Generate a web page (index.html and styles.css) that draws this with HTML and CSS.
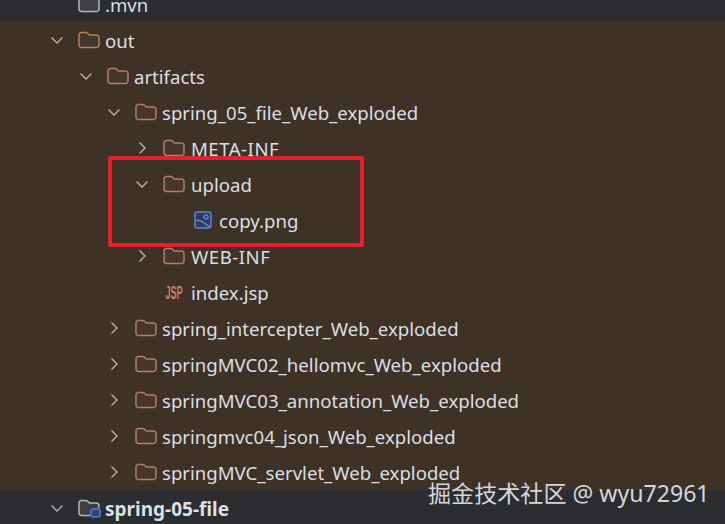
FILE: index.html
```html
<!DOCTYPE html>
<html lang="en">
<head>
<meta charset="utf-8">
<title>Project tree</title>
<link rel="stylesheet" href="styles.css">
</head>
<body>
<svg class="defs" width="0" height="0" aria-hidden="true">
  <defs>
    <symbol id="folder" viewBox="0 0 22 18">
      <path d="M1 4a2.5 2.5 0 0 1 2.5-2.5h4.3c.7 0 1.3.3 1.8.8l1.7 1.7h7.2A2.5 2.5 0 0 1 21 6.500V14a2.500 2.500 0 0 1-2.500 2.500h-15A2.500 2.500 0 0 1 1 14z" />
    </symbol>
    <symbol id="down" viewBox="0 0 16 16"><path d="M2.500 5.500 8 11l5.500-5.500" /></symbol>
    <symbol id="right" viewBox="0 0 16 16"><path d="M5.500 2.500 11 8l-5.500 5.500" /></symbol>
  </defs>
</svg>
<main class="tree">
  <section class="band-top">
    <div class="row l0"><span class="chev"></span><svg class="ico folder grey"><use href="#folder"/></svg><span class="name">.mvn</span></div>
  </section>
  <section class="band-mid">
    <div class="row l0"><svg class="chev"><use href="#down"/></svg><svg class="ico folder"><use href="#folder"/></svg><span class="name">out</span></div>
    <div class="row l1"><svg class="chev"><use href="#down"/></svg><svg class="ico folder"><use href="#folder"/></svg><span class="name">artifacts</span></div>
    <div class="row l2"><svg class="chev"><use href="#down"/></svg><svg class="ico folder"><use href="#folder"/></svg><span class="name">spring_05_file_Web_exploded</span></div>
    <div class="row l3"><svg class="chev"><use href="#right"/></svg><svg class="ico folder"><use href="#folder"/></svg><span class="name caps">META-INF</span></div>
    <div class="row l3"><svg class="chev"><use href="#down"/></svg><svg class="ico folder"><use href="#folder"/></svg><span class="name">upload</span></div>
    <div class="row l4"><span class="chev"></span>
      <svg class="ico image" viewBox="0 0 18 18"><rect x="1" y="1" width="16" height="16" rx="2.500"/><circle cx="12" cy="6" r="2"/><path d="M1.500 9.500 C5 8 9 11 16.500 16.500"/></svg>
      <span class="name">copy.png</span></div>
    <div class="row l3"><svg class="chev"><use href="#right"/></svg><svg class="ico folder"><use href="#folder"/></svg><span class="name caps">WEB-INF</span></div>
    <div class="row l3"><span class="chev"></span>
      <svg class="ico jsp" viewBox="0 0 22 18"><text transform="translate(2.500 15.500) scale(.5 1)">JSP</text></svg>
      <span class="name">index.jsp</span></div>
    <div class="row l2"><svg class="chev"><use href="#right"/></svg><svg class="ico folder"><use href="#folder"/></svg><span class="name">spring_intercepter_Web_exploded</span></div>
    <div class="row l2"><svg class="chev"><use href="#right"/></svg><svg class="ico folder"><use href="#folder"/></svg><span class="name">springMVC02_hellomvc_Web_exploded</span></div>
    <div class="row l2"><svg class="chev"><use href="#right"/></svg><svg class="ico folder"><use href="#folder"/></svg><span class="name">springMVC03_annotation_Web_exploded</span></div>
    <div class="row l2"><svg class="chev"><use href="#right"/></svg><svg class="ico folder"><use href="#folder"/></svg><span class="name">springmvc04_json_Web_exploded</span></div>
    <div class="row l2"><svg class="chev"><use href="#right"/></svg><svg class="ico folder"><use href="#folder"/></svg><span class="name">springMVC_servlet_Web_exploded</span></div>
  </section>
  <section class="band-bottom">
    <div class="row l0"><svg class="chev"><use href="#down"/></svg>
      <svg class="ico module" viewBox="0 0 22 18"><path class="outline" d="M12 16.500H3.500A2.500 2.500 0 0 1 1 14V4a2.500 2.500 0 0 1 2.500-2.500h4.300c.7 0 1.300.3 1.800.8l1.700 1.700h7.200A2.500 2.500 0 0 1 21 6.500V9"/><rect class="badge" x="13" y="10" width="9" height="8" rx="2"/></svg>
      <span class="name strong">spring-05-file</span></div>
  </section>
</main>
<div class="highlight"></div>
<div class="watermark">掘金技术社区 @ wyu72961</div>
</body>
</html>
```
FILE: styles.css
```css
* { box-sizing: border-box; }
html, body { height: 100%; }
body {
  margin: 0;
  position: relative;
  overflow: hidden;
  background: #3e3226;
  font-family: "Noto Sans", "Open Sans", sans-serif;
  color: #dcdfe4;
}
.defs { position: absolute; }
.tree { display: flex; flex-direction: column; height: 524px; }
.band-top {
  flex: 0 0 21px;
  min-height: 0;
  display: flex;
  flex-direction: column;
  justify-content: flex-end;
  background: #2b2d30;
}
.band-top .row { margin-bottom: -1px; }
.band-mid {
  flex: 0 0 469px;
  min-height: 0;
  padding-top: 1px;
  background: #3e3226;
}
.band-bottom {
  flex: 1;
  min-height: 0;
  background: #2b2d30;
}
.row {
  display: flex;
  align-items: center;
  height: 36px;
  font-size: 18.600px;
  white-space: nowrap;
  flex-shrink: 0;
}
.l0 { padding-left: 49px; }
.l1 { padding-left: 78px; }
.l2 { padding-left: 106px; }
.l3 { padding-left: 134px; }
.l4 { padding-left: 162px; }
.caps { letter-spacing: 0.500px; }
.chev {
  flex: 0 0 16px;
  width: 16px;
  height: 16px;
  margin-right: 13px;
  fill: none;
  stroke: #b7b2aa;
  stroke-width: 1.400;
}
.ico { flex: 0 0 22px; width: 22px; height: 18px; margin-right: 5px; }
.l3 .ico { margin-right: 6px; }
.folder { fill: #47362c; stroke: #b27f63; stroke-width: 1.500; }
.folder.grey { fill: #3d3f43; stroke: #b4b8bf; }
.image { width: 18px; flex-basis: 18px; margin: 0 7px 0 3px; fill: none; stroke: #5b86d8; stroke-width: 1.500; }
.image rect { fill: #2f3c55; }
.jsp { overflow: visible; }
.jsp text {
  font-family: "Liberation Sans", sans-serif;
  font-size: 18px;
  font-weight: 700;
  fill: #c9835a;
}
.module { overflow: visible; }
.module .outline { fill: #3d3f43; stroke: #b4b8bf; stroke-width: 1.500; }
.module .badge { fill: #2f4573; stroke: #4f7fe0; stroke-width: 1.500; }
.strong { font-weight: 700; font-size: 19px; position: relative; top: 1px; }
.highlight {
  position: absolute;
  left: 108px;
  top: 156px;
  width: 256px;
  height: 91px;
  border: 4px solid #e81f2a;
  border-radius: 2px;
}
.watermark {
  position: absolute;
  left: 428px;
  top: 476px;
  font-family: "Noto Sans", "Noto Sans CJK SC", sans-serif;
  font-size: 23.100px;
  line-height: 34px;
  color: #d6d6d6;
  white-space: nowrap;
}
```
